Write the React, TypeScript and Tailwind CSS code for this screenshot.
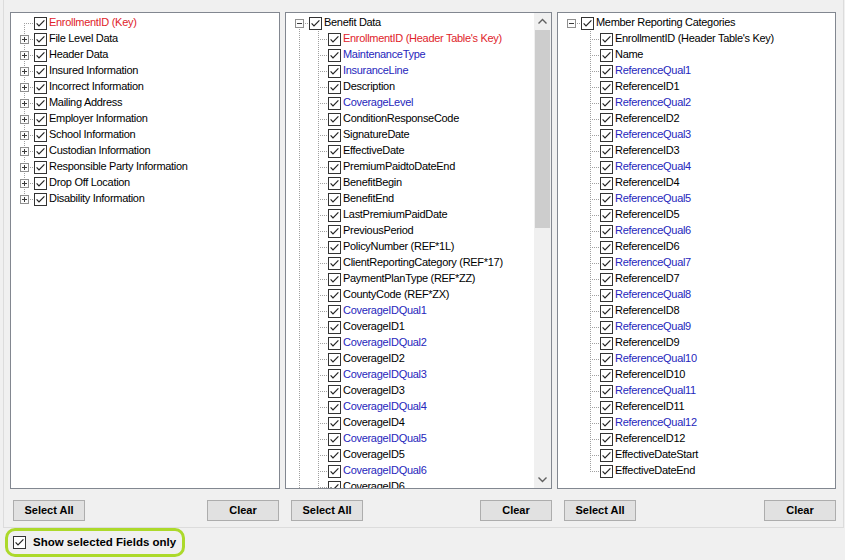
import React from "react";

type Item = { label: string; level: number; color?: "red" | "blue"; exp?: "plus" | "minus" };

const LINE = "#a0a0a0";

function Dots({ up, down, pass, own }: { up: boolean; down: boolean; pass: boolean; own: boolean }) {
  const rects: React.ReactElement[] = [];
  if (pass) {
    for (let y = 0; y < 16; y += 2) rects.push(<rect key={"p" + y} x={9} y={y} width={1} height={1} fill={LINE} />);
  }
  if (own) {
    const s = up ? 0 : 8;
    const e = down ? 15 : 8;
    for (let y = s; y <= e; y++) if (y % 2 === 0) rects.push(<rect key={"v" + y} x={9} y={y} width={1} height={1} fill={LINE} />);
    for (let x = 11; x < 19; x += 2) rects.push(<rect key={"h" + x} x={x} y={8} width={1} height={1} fill={LINE} />);
  }
  return <>{rects}</>;
}

function Cell({ up = false, down = false, pass = false, own = false, exp }: { up?: boolean; down?: boolean; pass?: boolean; own?: boolean; exp?: "plus" | "minus" }) {
  return (
    <svg width="19" height="16" viewBox="0 0 19 16" shapeRendering="crispEdges" className="shrink-0 block">
      <Dots up={up} down={down} pass={pass} own={own} />
      {exp && (
        <>
          <rect x={5.5} y={4.5} width={8} height={8} fill="#fcfcfc" stroke="#8f8f8f" strokeWidth={1} />
          <rect x={7} y={8} width={5} height={1} fill="#3a3a3a" />
          {exp === "plus" && <rect x={9} y={6} width={1} height={5} fill="#3a3a3a" />}
        </>
      )}
    </svg>
  );
}

function Check() {
  return (
    <svg width="13" height="13" viewBox="0 0 13 13" className="shrink-0 block">
      <rect x={0.5} y={0.5} width={12} height={12} fill="#ffffff" stroke="#333333" strokeWidth={1} shapeRendering="crispEdges" />
      <polyline points="2.6,6.4 5,8.9 10.4,3.4" fill="none" stroke="#222222" strokeWidth={1.2} />
    </svg>
  );
}

function Tree({ items, continues }: { items: Item[]; continues: boolean }) {
  const downs = items.map((it, i) => {
    let j = i + 1;
    while (j < items.length && items[j].level > it.level) j++;
    if (j < items.length) return items[j].level === it.level;
    return continues;
  });
  let parentIdx = -1;
  return (
    <div className="pt-[2px] pl-[4px]">
      {items.map((it, i) => {
        if (it.level === 0) parentIdx = i;
        const parentDown = parentIdx >= 0 ? downs[parentIdx] : false;
        const color = it.color === "red" ? "text-[#e0232a]" : it.color === "blue" ? "text-[#2626bc]" : "text-black";
        return (
          <div key={i} className="flex items-start h-[16px] whitespace-nowrap">
            {it.level === 1 && <Cell pass={parentDown} />}
            <Cell own up={i > 0} down={downs[i]} exp={it.exp} />
            <div className="mt-[2px]">
              <Check />
            </div>
            <span className={`ml-[2px] text-[11px] leading-[14px] tracking-[-0.3px] ${color}`}>{it.label}</span>
          </div>
        );
      })}
    </div>
  );
}

function Btn({ children, className = "" }: { children: React.ReactNode; className?: string }) {
  return (
    <div className={`w-[72px] h-[21px] bg-[#e1e1e1] border border-[#adadad] flex items-center justify-center text-[11px] font-bold text-black ${className}`}>
      {children}
    </div>
  );
}

const p1: Item[] = [
  { label: "EnrollmentID (Key)", level: 0, color: "red" },
  { label: "File Level Data", level: 0, exp: "plus" },
  { label: "Header Data", level: 0, exp: "plus" },
  { label: "Insured Information", level: 0, exp: "plus" },
  { label: "Incorrect Information", level: 0, exp: "plus" },
  { label: "Mailing Address", level: 0, exp: "plus" },
  { label: "Employer Information", level: 0, exp: "plus" },
  { label: "School Information", level: 0, exp: "plus" },
  { label: "Custodian Information", level: 0, exp: "plus" },
  { label: "Responsible Party Information", level: 0, exp: "plus" },
  { label: "Drop Off Location", level: 0, exp: "plus" },
  { label: "Disability Information", level: 0, exp: "plus" },
];

const p2: Item[] = [
  { label: "Benefit Data", level: 0, exp: "minus" },
  { label: "EnrollmentID (Header Table's Key)", level: 1, color: "red" },
  { label: "MaintenanceType", level: 1, color: "blue" },
  { label: "InsuranceLine", level: 1, color: "blue" },
  { label: "Description", level: 1 },
  { label: "CoverageLevel", level: 1, color: "blue" },
  { label: "ConditionResponseCode", level: 1 },
  { label: "SignatureDate", level: 1 },
  { label: "EffectiveDate", level: 1 },
  { label: "PremiumPaidtoDateEnd", level: 1 },
  { label: "BenefitBegin", level: 1 },
  { label: "BenefitEnd", level: 1 },
  { label: "LastPremiumPaidDate", level: 1 },
  { label: "PreviousPeriod", level: 1 },
  { label: "PolicyNumber (REF*1L)", level: 1 },
  { label: "ClientReportingCategory (REF*17)", level: 1 },
  { label: "PaymentPlanType (REF*ZZ)", level: 1 },
  { label: "CountyCode (REF*ZX)", level: 1 },
  { label: "CoverageIDQual1", level: 1, color: "blue" },
  { label: "CoverageID1", level: 1 },
  { label: "CoverageIDQual2", level: 1, color: "blue" },
  { label: "CoverageID2", level: 1 },
  { label: "CoverageIDQual3", level: 1, color: "blue" },
  { label: "CoverageID3", level: 1 },
  { label: "CoverageIDQual4", level: 1, color: "blue" },
  { label: "CoverageID4", level: 1 },
  { label: "CoverageIDQual5", level: 1, color: "blue" },
  { label: "CoverageID5", level: 1 },
  { label: "CoverageIDQual6", level: 1, color: "blue" },
  { label: "CoverageID6", level: 1 },
];

const p3: Item[] = [
  { label: "Member Reporting Categories", level: 0, exp: "minus" },
  { label: "EnrollmentID (Header Table's Key)", level: 1 },
  { label: "Name", level: 1 },
  ...Array.from({ length: 12 }).flatMap((_, k) => [
    { label: `ReferenceQual${k + 1}`, level: 1, color: "blue" as const },
    { label: `ReferenceID${k + 1}`, level: 1 },
  ]),
  { label: "EffectiveDateStart", level: 1 },
  { label: "EffectiveDateEnd", level: 1 },
];

export default function App() {
  return (
    <div className="w-[845px] h-[560px] bg-[#f0f0f0] overflow-hidden font-['Liberation_Sans',Arial,sans-serif] select-none">
      <div className="ml-[3px] w-[841px] h-[528px] border-x border-b border-[#dcdcdc] pt-[12px] pl-[6px]">
        <div className="flex gap-[5px]">
          {/* Panel 1 */}
          <div className="w-[270px] flex flex-col">
            <div className="h-[477px] bg-white border border-[#828790] overflow-hidden">
              <Tree items={p1} continues={false} />
            </div>
            <div className="mt-[11px] flex justify-between">
              <Btn className="ml-[3px]">Select All</Btn>
              <Btn className="mr-[1px]">Clear</Btn>
            </div>
          </div>
          {/* Panel 2 */}
          <div className="w-[267px] flex flex-col">
            <div className="h-[477px] bg-white border border-[#828790] overflow-hidden flex">
              <div className="flex-1 overflow-hidden">
                <Tree items={p2} continues={true} />
              </div>
              <div className="w-[17px] bg-[#f0f0f0] flex flex-col">
                <svg width="17" height="17" viewBox="0 0 17 17" className="block shrink-0">
                  <polyline points="4.5,10.5 8.5,6.5 12.5,10.5" fill="none" stroke="#606060" strokeWidth={1.4} />
                </svg>
                <div className="flex-1">
                  <div className="mx-[1px] h-[198px] bg-[#cdcdcd]" />
                </div>
                <svg width="17" height="17" viewBox="0 0 17 17" className="block shrink-0">
                  <polyline points="4.5,6.5 8.5,10.5 12.5,6.5" fill="none" stroke="#606060" strokeWidth={1.4} />
                </svg>
              </div>
            </div>
            <div className="mt-[11px] flex justify-between">
              <Btn className="ml-[6px]">Select All</Btn>
              <Btn>Clear</Btn>
            </div>
          </div>
          {/* Panel 3 */}
          <div className="w-[279px] flex flex-col">
            <div className="h-[477px] bg-white border border-[#828790] overflow-hidden">
              <Tree items={p3} continues={false} />
            </div>
            <div className="mt-[11px] flex justify-between">
              <Btn className="ml-[7px]">Select All</Btn>
              <Btn>Clear</Btn>
            </div>
          </div>
        </div>
      </div>
      <div className="ml-[5px] w-[180px] h-[29px] border-[3px] border-[#acd92b] rounded-[10px] flex items-center pl-[5px]">
        <Check />
        <span className="ml-[7px] text-[11.5px] font-bold text-black whitespace-nowrap">Show selected Fields only</span>
      </div>
    </div>
  );
}
